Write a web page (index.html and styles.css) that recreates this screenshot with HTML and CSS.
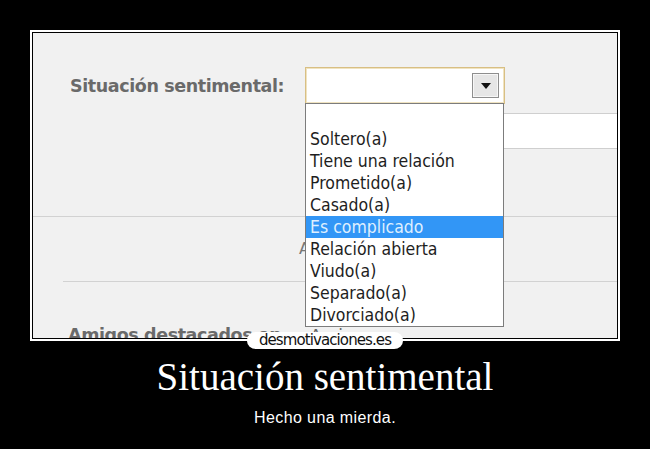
FILE: index.html
```html
<!DOCTYPE html>
<html lang="es">
<head>
<meta charset="utf-8">
<title>Situación sentimental</title>
<link rel="stylesheet" href="styles.css">
</head>
<body>
<main class="poster">
  <div class="frame">
    <div class="shot">
      <div class="status-row">
        <span class="field-label">Situación sentimental:</span>
        <div class="select">
          <span class="select-btn">
            <svg width="10" height="6" viewBox="0 0 10 6"><path d="M0 0H10L5 6Z" fill="#111"/></svg>
          </span>
        </div>
      </div>
      <div class="text-row">
        <div class="text-input"></div>
      </div>
      <div class="section">
        <span class="hidden-word">Añadir</span>
      </div>
      <div class="friends-row">
        <span class="field-label">Amigos destacados en</span>
        <span class="friends-value">Amigos</span>
      </div>

      <ul class="dropdown">
        <li class="blank">&nbsp;</li>
        <li>Soltero(a)</li>
        <li>Tiene una relación</li>
        <li>Prometido(a)</li>
        <li>Casado(a)</li>
        <li class="active">Es complicado</li>
        <li>Relación abierta</li>
        <li>Viudo(a)</li>
        <li>Separado(a)</li>
        <li>Divorciado(a)</li>
      </ul>
    </div>
    <div class="brand"><span>desmotivaciones.es</span></div>
  </div>
  <h1 class="title">Situación sentimental</h1>
  <p class="caption">Hecho una mierda.</p>
</main>
</body>
</html>
```

FILE: styles.css
```css
* { box-sizing: border-box; }

html, body {
  margin: 0;
  padding: 0;
  background: #000;
  width: 650px;
  height: 449px;
  overflow: hidden;
}

.poster {
  display: flex;
  flex-direction: column;
  align-items: center;
  padding-top: 30px;
}

/* white picture frame */
.frame {
  position: relative;
  width: 590px;
  height: 311px;
  border: 2px solid #fff;
  padding: 1px;
  background: #000;
}

.shot {
  position: relative;
  width: 584px;
  height: 305px;
  background: #f1f1f1;
  overflow: hidden;
  font-family: "DejaVu Sans", sans-serif;
}

.field-label {
  font-family: "DejaVu Sans", sans-serif;
  font-weight: bold;
  font-size: 17.5px;
  letter-spacing: -0.4px;
  color: #6a6a6a;
  white-space: nowrap;
}

.status-row {
  display: flex;
  align-items: flex-start;
  padding-left: 37px;
  padding-top: 34px;
  height: 70px;
}

.status-row .field-label {
  margin-top: 9px;
  width: 235px;
}

.select {
  width: 200px;
  height: 37px;
  background: #fff;
  border: 1px solid #d8bf84;
  box-shadow: inset 0 0 0 1px #f0e3c0;
  display: flex;
  justify-content: flex-end;
  align-items: center;
  padding-right: 5px;
}

.select-btn {
  width: 27px;
  height: 25px;
  background: #e6e6e6;
  border: 1px solid #8e8e8e;
  box-shadow: inset 0 0 0 1px #f7f7f7;
  display: flex;
  align-items: center;
  justify-content: center;
}

.text-row {
  height: 114px;
  padding-top: 10px;
  padding-left: 280px;
  border-bottom: 1px solid #d2d2d2;
}

.text-input {
  height: 36px;
  background: #fff;
  border-top: 1px solid #cfcfcf;
  border-bottom: 1px solid #cfcfcf;
}

.section {
  margin-left: 30px;
  height: 65px;
  border-bottom: 1px solid #d2d2d2;
  padding-left: 236px;
  padding-top: 22px;
  font-size: 16px;
  color: #777;
}

.friends-row {
  display: flex;
  padding-left: 35px;
  padding-top: 43px;
}

.friends-row .field-label {
  width: 242px;
}

.friends-value {
  font-size: 17px;
  color: #666;
  padding-top: 1px;
}

/* open list of the select */
.dropdown {
  position: absolute;
  left: 272px;
  top: 70px;
  width: 199px;
  margin: 0;
  padding: 0;
  list-style: none;
  background: #fff;
  border: 1px solid #7c7c7c;
  font-family: "DejaVu Sans Condensed", "DejaVu Sans", sans-serif;
  font-size: 17.5px;
  color: #1e1e1e;
}

.dropdown li {
  height: 22px;
  line-height: 22px;
  padding-left: 4px;
  white-space: nowrap;
}

.dropdown li.blank {
  height: 24px;
}

.dropdown li.active {
  background: #3296f6;
  color: #dfefff;
}

/* site badge sitting on the bottom edge of the frame */
.brand {
  position: absolute;
  left: 215px;
  bottom: -10px;
  height: 17px;
  width: 156px;
  background: #fff;
  border-radius: 9px / 8px;
  display: flex;
  align-items: center;
  justify-content: center;
}

.brand span {
  font-family: "DejaVu Sans", sans-serif;
  font-size: 15px;
  letter-spacing: -0.9px;
  color: #111;
  line-height: 17px;
}

.title {
  margin: 13px 0 0;
  font-family: "Liberation Serif", serif;
  font-weight: normal;
  font-size: 39px;
  line-height: 46px;
  color: #fff;
}

.caption {
  margin: 8px 0 0;
  font-family: "Liberation Sans", sans-serif;
  font-size: 16px;
  letter-spacing: 0.4px;
  line-height: 19px;
  color: #fff;
}
```
